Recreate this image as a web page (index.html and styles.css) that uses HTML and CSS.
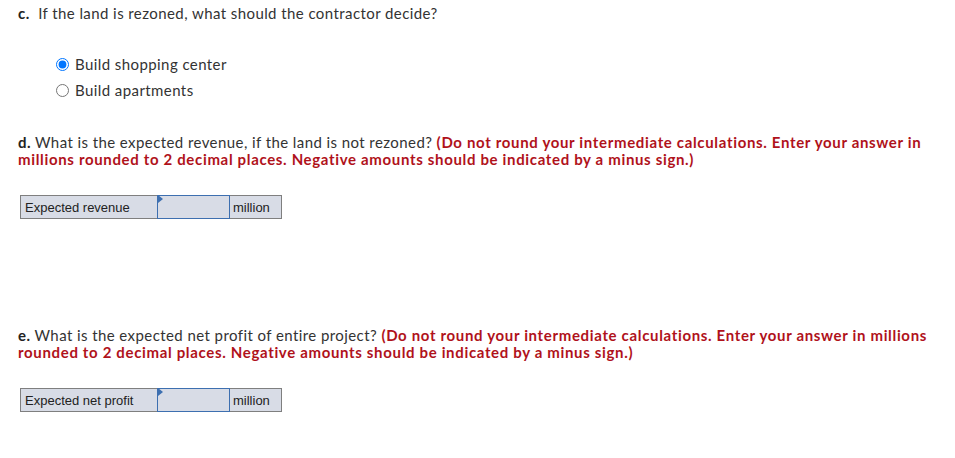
FILE: index.html
```html
<!DOCTYPE html>
<html>
<head>
<meta charset="utf-8">
<link rel="stylesheet" href="styles.css">
</head>
<body>
<div class="page">
  <section class="part part-c">
    <p class="question"><b>c.</b>&nbsp; If the land is rezoned, what should the contractor decide?</p>
    <div class="options">
      <label class="option"><input type="radio" name="c" checked> Build shopping center</label>
      <label class="option"><input type="radio" name="c"> Build apartments</label>
    </div>
  </section>

  <section class="part part-d">
    <p class="question"><b>d.</b> What is the expected revenue, if the land is not rezoned? <span class="note">(Do not round your intermediate calculations. Enter your answer in millions rounded to 2 decimal places. Negative amounts should be indicated by a minus sign.)</span></p>
    <div class="answer">
      <div class="cell label">Expected revenue</div>
      <div class="cell input"><span class="flag"></span></div>
      <div class="cell unit">million</div>
    </div>
  </section>

  <section class="part part-e">
    <p class="question"><b>e.</b> What is the expected net profit of entire project? <span class="note">(Do not round your intermediate calculations. Enter your answer in millions rounded to 2 decimal places. Negative amounts should be indicated by a minus sign.)</span></p>
    <div class="answer">
      <div class="cell label">Expected net profit</div>
      <div class="cell input"><span class="flag"></span></div>
      <div class="cell unit">million</div>
    </div>
  </section>
</div>
</body>
</html>
```
FILE: styles.css
```css
html, body {
  margin: 0;
  padding: 0;
  background: #fff;
}
.page {
  padding: 5px 18px 0 18px;
  width: 915px;
  font-family: Lato, "Open Sans", sans-serif;
  font-size: 15px;
  line-height: 17px;
  letter-spacing: 0.42px;
  color: #333;
}
.question {
  margin: 0;
}
.question b {
  font-weight: 700;
  color: #222;
}
.note {
  color: #b0121b;
  font-weight: 700;
  letter-spacing: 0.66px;
}
.options {
  margin: 34px 0 0 38px;
  display: flex;
  flex-direction: column;
  gap: 9px;
}
.option {
  display: flex;
  align-items: center;
  height: 17px;
}
.option input {
  margin: 0 6px 0 0;
  width: 13px;
  height: 13px;
}
.part-d {
  margin-top: 35px;
}
.part-e {
  margin-top: 108px;
}
.answer {
  margin: 27px 0 0 2px;
  display: flex;
  width: 262px;
  height: 24px;
  font-family: "Liberation Sans", Arial, sans-serif;
  font-size: 13px;
  letter-spacing: 0;
  color: #222;
  background: #d8dce6;
}
.cell {
  box-sizing: border-box;
  height: 24px;
  display: flex;
  align-items: center;
}
.label {
  width: 137px;
  padding-left: 4px;
  border: 1px solid #7f7f7f;
  border-right: none;
}
.input {
  width: 73px;
  border: 1px solid #3d6fb0;
  position: relative;
}
.flag {
  position: absolute;
  left: 0;
  top: -1px;
  width: 0;
  height: 0;
  border-top: 4px solid transparent;
  border-bottom: 4px solid transparent;
  border-left: 5px solid #3d6fb0;
}
.unit {
  width: 52px;
  padding-left: 3px;
  border: 1px solid #7f7f7f;
  border-left: none;
}
```
